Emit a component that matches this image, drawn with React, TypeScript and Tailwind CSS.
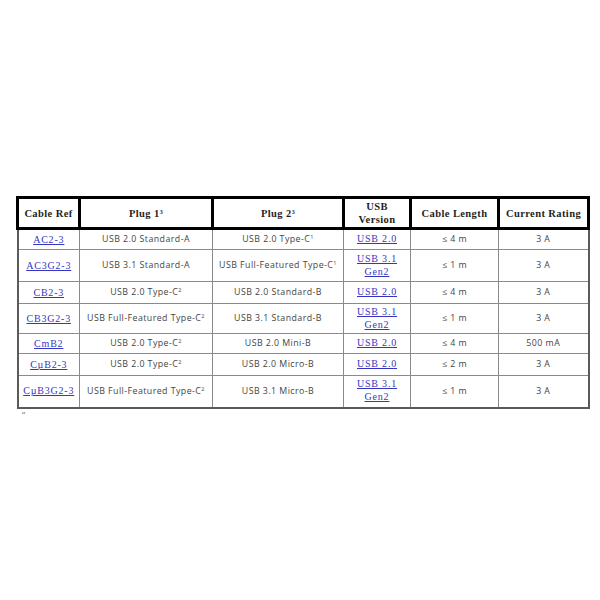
type Row = {
  ref: string;
  plug1: string;
  sup1: string;
  plug2: string;
  sup2?: string;
  usb: string[];
  length: string;
  current: string;
  h: string;
};

const rows: Row[] = [
  { ref: "AC2-3", plug1: "USB 2.0 Standard-A", sup1: "", plug2: "USB 2.0 Type-C", sup2: "1", usb: ["USB 2.0"], length: "≤ 4 m", current: "3 A", h: "h-[21px]" },
  { ref: "AC3G2-3", plug1: "USB 3.1 Standard-A", sup1: "", plug2: "USB Full-Featured Type-C", sup2: "1", usb: ["USB 3.1", "Gen2"], length: "≤ 1 m", current: "3 A", h: "h-[32px]" },
  { ref: "CB2-3", plug1: "USB 2.0 Type-C", sup1: "2", plug2: "USB 2.0 Standard-B", usb: ["USB 2.0"], length: "≤ 4 m", current: "3 A", h: "h-[22px]" },
  { ref: "CB3G2-3", plug1: "USB Full-Featured Type-C", sup1: "2", plug2: "USB 3.1 Standard-B", usb: ["USB 3.1", "Gen2"], length: "≤ 1 m", current: "3 A", h: "h-[30px]" },
  { ref: "CmB2", plug1: "USB 2.0 Type-C", sup1: "2", plug2: "USB 2.0 Mini-B", usb: ["USB 2.0"], length: "≤ 4 m", current: "500 mA", h: "h-[20px]" },
  { ref: "CµB2-3", plug1: "USB 2.0 Type-C", sup1: "2", plug2: "USB 2.0 Micro-B", usb: ["USB 2.0"], length: "≤ 2 m", current: "3 A", h: "h-[22px]" },
  { ref: "CµB3G2-3", plug1: "USB Full-Featured Type-C", sup1: "2", plug2: "USB 3.1 Micro-B", usb: ["USB 3.1", "Gen2"], length: "≤ 1 m", current: "3 A", h: "h-[32px]" },
];

const serif = "font-['Liberation_Serif','DejaVu_Serif',serif]";
const sans = "font-['Open_Sans','DejaVu_Sans',sans-serif]";

const HeadCell = ({ children, w }: { children: React.ReactNode; w: string }) => (
  <th className={`${w} border-[3px] border-black text-center align-middle font-bold text-[10.5px] leading-[13px] text-[#1f1f1f] tracking-[0.4px] ${serif}`}>
    {children}
  </th>
);

const Cell = ({ children }: { children: React.ReactNode }) => (
  <td className={`border border-[#8a8a8a] text-center align-middle text-[8.8px] leading-[11px] text-[#444] tracking-[0.45px] ${sans}`}>
    {children}
  </td>
);

const Link = ({ children }: { children: React.ReactNode }) => (
  <span className={`text-[#3535c4] underline underline-offset-[1px] text-[10px] leading-[12px] tracking-[0.8px] ${serif}`}>{children}</span>
);

export default function App() {
  return (
    <div className="w-[600px] h-[600px] bg-white pt-[196px] pl-[16px]">
      <table className="border-collapse table-fixed w-[571px] border-2 border-[#5a5a5a]">
        <thead>
          <tr className="h-[31px]">
            <HeadCell w="w-[62px]">Cable Ref</HeadCell>
            <HeadCell w="w-[133px]">
              Plug 1<sup className="text-[6px]">3</sup>
            </HeadCell>
            <HeadCell w="w-[131px]">
              Plug 2<sup className="text-[6px]">3</sup>
            </HeadCell>
            <HeadCell w="w-[67px]">
              USB
              <br />
              Version
            </HeadCell>
            <HeadCell w="w-[88px]">Cable Length</HeadCell>
            <HeadCell w="w-[90px]">Current Rating</HeadCell>
          </tr>
        </thead>
        <tbody>
          {rows.map((r) => (
            <tr key={r.ref} className={r.h}>
              <Cell>
                <Link>{r.ref}</Link>
              </Cell>
              <Cell>
                {r.plug1}
                {r.sup1 && <sup className="text-[5.5px]">{r.sup1}</sup>}
              </Cell>
              <Cell>
                {r.plug2}
                {r.sup2 && <sup className="text-[5.5px]">{r.sup2}</sup>}
              </Cell>
              <Cell>
                {r.usb.map((u, i) => (
                  <div key={i} className="leading-[13px]">
                    <Link>{u}</Link>
                  </div>
                ))}
              </Cell>
              <Cell>{r.length}</Cell>
              <Cell>{r.current}</Cell>
            </tr>
          ))}
        </tbody>
      </table>
      <div className={`pl-[6px] pt-[2px] text-[9px] leading-[9px] text-[#777] ${sans}`}>”</div>
    </div>
  );
}
